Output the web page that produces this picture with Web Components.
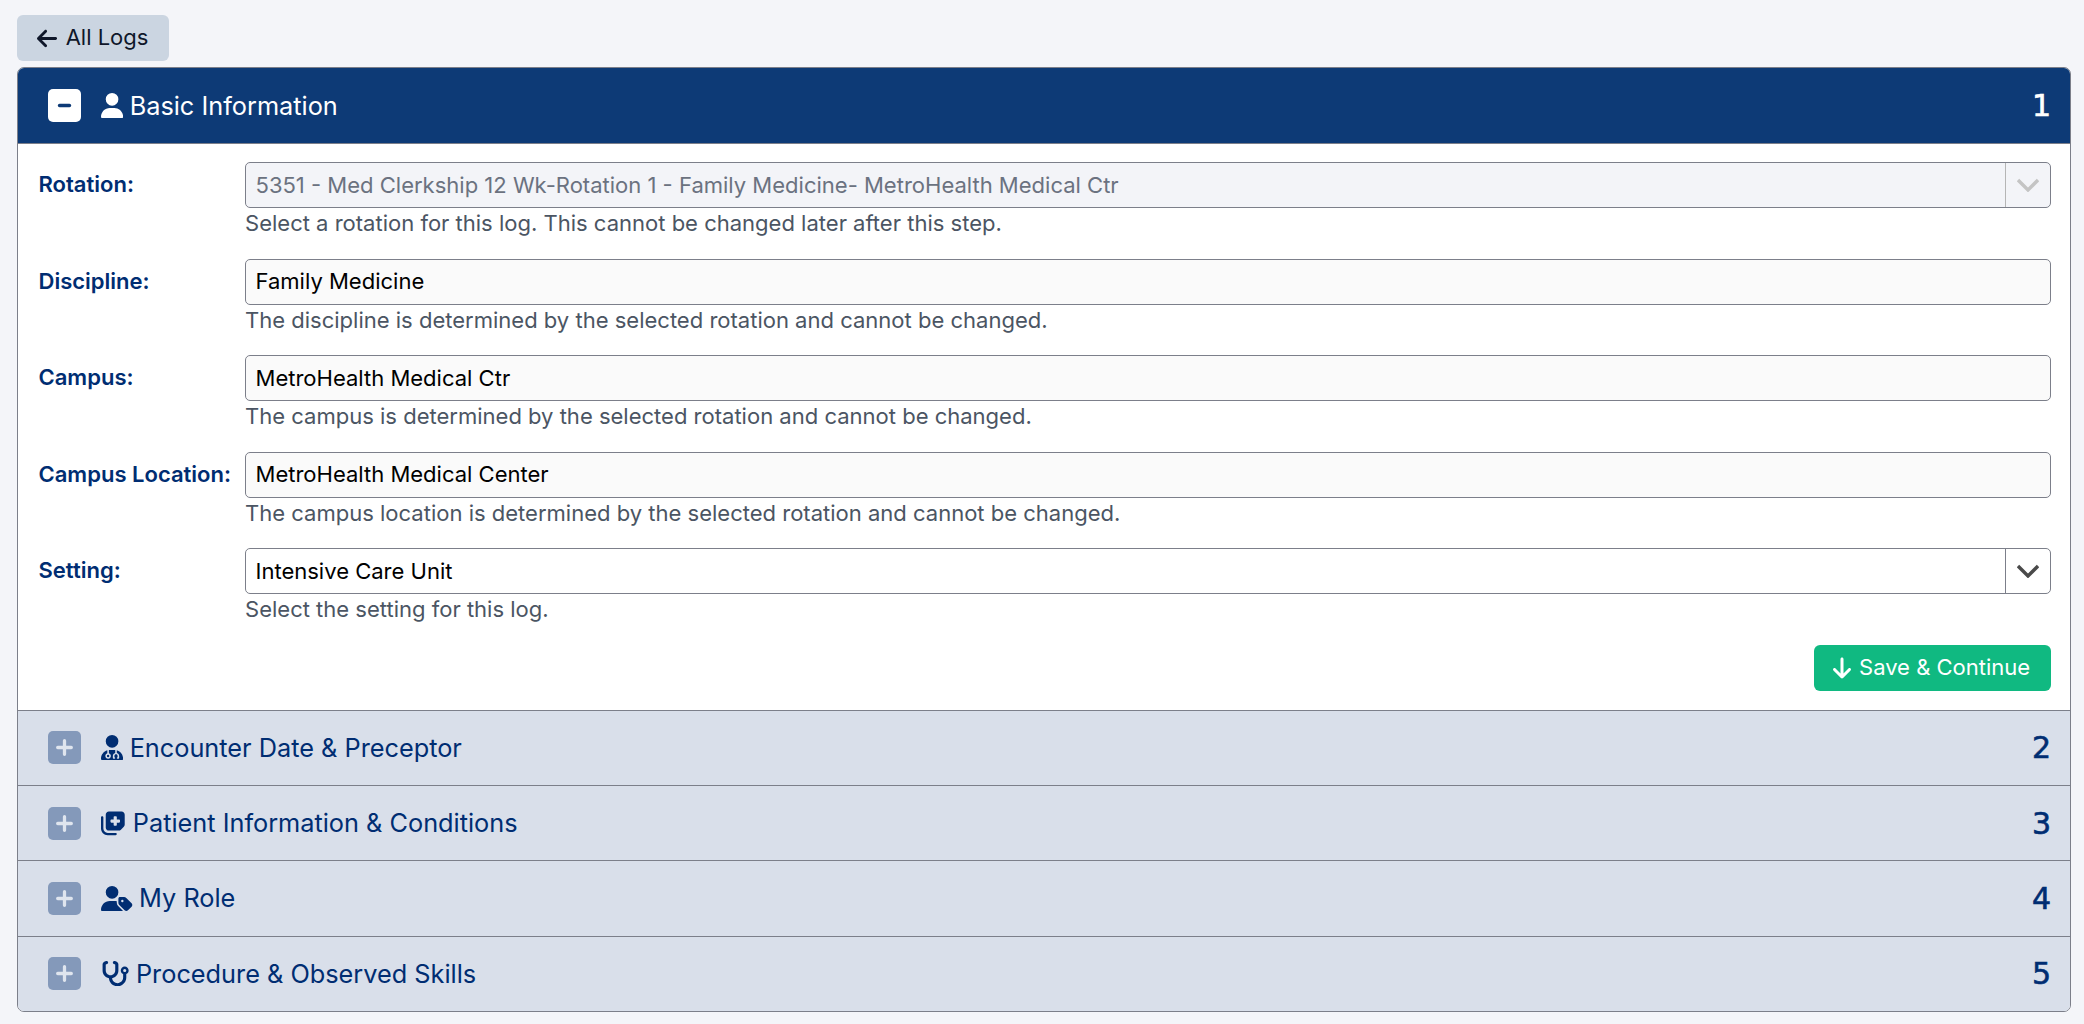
<!DOCTYPE html>
<html>
<head>
<meta charset="utf-8">
<title>Log</title>
<style>
  html, body { margin: 0; padding: 0; }
  body {
    background: #f4f5f9;
    font-family: Inter, "Liberation Sans", sans-serif;
    font-size: 22px;
    padding: 15px 13px 12px 17px;
  }
</style>
</head>
<body>
  <back-button label="All Logs"></back-button>
  <log-accordion>
    <log-section number="1" heading="Basic Information" icon="user" open>
      <log-field label="Rotation:" value="5351 - Med Clerkship 12 Wk-Rotation 1 - Family Medicine- MetroHealth Medical Ctr" help="Select a rotation for this log. This cannot be changed later after this step." kind="select" disabled></log-field>
      <log-field label="Discipline:" value="Family Medicine" help="The discipline is determined by the selected rotation and cannot be changed."></log-field>
      <log-field label="Campus:" value="MetroHealth Medical Ctr" help="The campus is determined by the selected rotation and cannot be changed."></log-field>
      <log-field label="Campus Location:" value="MetroHealth Medical Center" help="The campus location is determined by the selected rotation and cannot be changed."></log-field>
      <log-field label="Setting:" value="Intensive Care Unit" help="Select the setting for this log." kind="select"></log-field>
      <save-button label="Save &amp; Continue"></save-button>
    </log-section>
    <log-section number="2" heading="Encounter Date &amp; Preceptor" icon="doctor"></log-section>
    <log-section number="3" heading="Patient Information &amp; Conditions" icon="patient"></log-section>
    <log-section number="4" heading="My Role" icon="role"></log-section>
    <log-section number="5" heading="Procedure &amp; Observed Skills" icon="stethoscope"></log-section>
  </log-accordion>

<script>
const ICONS = {
  user: `<svg height="25.300" viewBox="0 0 448 512" fill="currentColor"><path d="M224 256A128 128 0 1 0 224 0a128 128 0 1 0 0 256zm-45.7 48C79.8 304 0 383.8 0 482.3C0 498.7 13.3 512 29.7 512H418.3c16.4 0 29.7-13.3 29.7-29.7C448 383.8 368.2 304 269.7 304H178.3z"/></svg>`,
  doctor: `<svg height="25.300" viewBox="0 0 448 512" fill="currentColor"><path d="M224 256A128 128 0 1 0 224 0a128 128 0 1 0 0 256zm-96 55.200C54 332.900 0 401.300 0 482.300C0 498.700 13.300 512 29.700 512H418.300c16.400 0 29.700-13.300 29.700-29.700c0-81-54-149.400-128-171.100V362c27.600 7.100 48 32.200 48 62v40c0 8.800-7.200 16-16 16H336c-8.800 0-16-7.200-16-16s7.200-16 16-16V424c0-17.700-14.300-32-32-32s-32 14.300-32 32v24c8.800 0 16 7.200 16 16s-7.200 16-16 16H256c-8.800 0-16-7.200-16-16V424c0-29.800 20.400-54.900 48-62V304.900c-6-.6-12.100-.9-18.300-.9H178.300c-6.200 0-12.300 .3-18.300 .9v65.400c23.100 6.900 40 28.300 40 53.700c0 30.900-25.100 56-56 56s-56-25.100-56-56c0-25.400 16.900-46.800 40-53.700V311.200zM144 448a24 24 0 1 0 0-48 24 24 0 1 0 0 48z"/></svg>`,
  patient: `<svg height="25.300" viewBox="0 0 512 512" fill="currentColor"><path d="M96 352V96c0-35.300 28.700-64 64-64H416c35.300 0 64 28.700 64 64V293.500c0 17-6.700 33.300-18.700 45.300l-58.500 58.500c-12 12-28.300 18.700-45.300 18.700H160c-35.300 0-64-28.700-64-64zM272 128c-8.800 0-16 7.200-16 16v48H208c-8.800 0-16 7.200-16 16v32c0 8.800 7.200 16 16 16h48v48c0 8.800 7.200 16 16 16h32c8.800 0 16-7.200 16-16V256h48c8.800 0 16-7.200 16-16V208c0-8.800-7.200-16-16-16H320V144c0-8.800-7.200-16-16-16H272zm24 336c13.300 0 24 10.700 24 24s-10.700 24-24 24H136C60.900 512 0 451.100 0 376V152c0-13.300 10.700-24 24-24s24 10.700 24 24l0 224c0 48.600 39.400 88 88 88H296z"/></svg>`,
  role: `<svg height="25.300" viewBox="0 0 640 512" fill="currentColor"><path d="M224 256A128 128 0 1 0 224 0a128 128 0 1 0 0 256zm-45.700 48C79.800 304 0 383.800 0 482.300C0 498.700 13.300 512 29.700 512H418.300c10 0 18.800-4.900 24.200-12.500l-99.200-99.200c-14.900-14.900-23.300-35.100-23.300-56.100v-33c-15.900-4.700-32.800-7.200-50.300-7.200H178.300zM384 224c-17.700 0-32 14.300-32 32v82.700c0 17 6.700 33.300 18.700 45.300L478.100 491.300c18.700 18.700 49.100 18.700 67.900 0l73.400-73.400c18.700-18.700 18.700-49.100 0-67.900L512 242.700c-12-12-28.300-18.700-45.300-18.700H384zm24 80a24 24 0 1 1 48 0 24 24 0 1 1 -48 0z"/></svg>`,
  stethoscope: `<svg height="25.300" viewBox="0 0 576 512" fill="currentColor"><path d="M142.400 21.900c5.600 16.800-3.500 34.900-20.200 40.500L96 71.100V192c0 53 43 96 96 96s96-43 96-96V71.100l-26.100-8.700c-16.800-5.600-25.800-23.700-20.200-40.500s23.700-25.800 40.500-20.200l26.100 8.700C334.500 19.100 352 43.300 352 70.700V192c0 77.200-54.600 141.600-127.300 156.700C231 404.600 278.400 448 336 448c61.900 0 112-50.100 112-112V265.300c-28.300-12.300-48-40.500-48-73.300c0-44.200 35.800-80 80-80s80 35.800 80 80c0 32.800-19.700 61-48 73.300V336c0 97.200-78.800 176-176 176c-92.900 0-168.900-71.900-175.500-163.100C87.200 334.200 32 269.600 32 192V70.700c0-27.500 17.600-51.800 43.700-60.500l26.100-8.800c16.800-5.600 34.900 3.500 40.500 20.200zM480 224a32 32 0 1 0 0-64 32 32 0 1 0 0 64z"/></svg>`
};

class BackButton extends HTMLElement {
  constructor() {
    super();
    this.shadow = this.attachShadow({ mode: 'open' });
  }
  connectedCallback() {
    this.shadow.innerHTML = /*html*/`
      <style>
        :host { display: flex; }
        button {
          display: flex; align-items: center; gap: 8.500px;
          height: 46px; width: 152px; padding: 0 0 0 20px;
          background: #cbd5e1; color: #0f172a;
          border: 0; border-radius: 6px;
          font: 400 22px Inter, sans-serif;
        }
        span { padding-bottom: 2px; }
      </style>
      <button>
        <svg height="23" viewBox="0 0 448 512" fill="currentColor"><path d="M9.400 233.400c-12.500 12.500-12.500 32.800 0 45.300l160 160c12.500 12.500 32.800 12.500 45.300 0s12.500-32.800 0-45.300L109.300 288 416 288c17.700 0 32-14.300 32-32s-14.300-32-32-32l-306.700 0L214.600 118.600c12.500-12.500 12.500-32.800 0-45.300s-32.800-12.500-45.300 0l-160 160z"/></svg>
        <span>${this.getAttribute('label')}</span>
      </button>`;
  }
}

class LogAccordion extends HTMLElement {
  constructor() {
    super();
    this.shadow = this.attachShadow({ mode: 'open' });
  }
  connectedCallback() {
    this.shadow.innerHTML = /*html*/`
      <style>
        :host {
          display: block; margin-top: 6px;
          border: 1px solid #7c7f8a; border-radius: 7px;
          overflow: hidden; background: #fff;
        }
      </style>
      <slot></slot>`;
  }
}

class LogSection extends HTMLElement {
  constructor() {
    super();
    this.shadow = this.attachShadow({ mode: 'open' });
  }
  connectedCallback() {
    const open = this.hasAttribute('open');
    const number = this.getAttribute('number');
    this.shadow.innerHTML = /*html*/`
      <style>
        :host { display: block; }
        :host(:not(:first-child)) { border-top: 1px solid #7c7f8a; }
        .head {
          display: flex; align-items: center;
          height: 74.350px; padding: 0 19px 0 29.500px;
          background: #d9dfea; color: #002d72;
          font-size: 25.300px; line-height: 1;
        }
        :host([open]) .head { background: #0d3a76; color: #fff; height: 76px; border-bottom: 1px solid #7c7f8a; box-sizing: border-box; }
        .toggle {
          flex: none; width: 33px; height: 33px; margin-right: 20.500px;
          border-radius: 5px; background: #8499ba;
          display: flex; align-items: center; justify-content: center;
        }
        :host([open]) .toggle { background: #fff; }
        .icon { display: flex; flex: none; margin-right: 6.500px; }
        .title { flex: 1; padding-bottom: .6px; }
        .num { font: 400 30px "DejaVu Sans", sans-serif; -webkit-text-stroke: .6px currentColor; }
        .body { padding: 18px 19px 19px 20.500px; }
      </style>
      <div class="head">
        <span class="toggle">
          <svg width="17" height="17" viewBox="0 0 17 17" fill="none" stroke="${open ? '#0d3a76' : '#dfe5ee'}" stroke-width="3.300" stroke-linecap="round">
            ${open ? '<path d="M3.500 8.500h10"/>' : '<path d="M1.700 8.500h13.600M8.500 1.700v13.600"/>'}
          </svg>
        </span>
        <span class="icon">${ICONS[this.getAttribute('icon')]}</span>
        <span class="title">${this.getAttribute('heading').replace('&', '&amp;')}</span>
        <span class="num">${number}</span>
      </div>
      ${open ? '<div class="body"><slot></slot></div>' : ''}`;
  }
}

class LogField extends HTMLElement {
  constructor() {
    super();
    this.shadow = this.attachShadow({ mode: 'open' });
  }
  connectedCallback() {
    const isSelect = this.getAttribute('kind') === 'select';
    this.shadow.innerHTML = /*html*/`
      <style>
        :host {
          display: grid; grid-template-columns: 206.500px 1fr;
          margin-bottom: 19.500px;
          font-size: 22.030px;
        }
        label {
          height: 46px; line-height: 45.500px;
          font-weight: 600; color: #002d72; white-space: nowrap;
        }
        .box {
          display: flex; align-items: center; box-sizing: border-box;
          height: 46px; border: 1px solid #7c7f8a; border-radius: 5px;
          background: ${isSelect ? '#fff' : '#fafafa'};
          color: #000;
        }
        .value { flex: 1; padding: 0 0 1px 9.500px; }
        .arrow {
          width: 44px; height: 100%; border-left: 1px solid #7c7f8a;
          display: flex; align-items: center; justify-content: center;
          color: #4a4a4a;
        }
        :host([disabled]) .box { background: #f3f4f8; color: #6b7280; }
        :host([disabled]) .arrow { color: #c4c4c4; border-left-color: #b5b5b5; }
        .help { color: #4b5563; line-height: 31px; height: 31px; }
      </style>
      <label>${this.getAttribute('label')}</label>
      <div>
        <div class="box">
          <span class="value">${this.getAttribute('value')}</span>
          ${isSelect ? `<span class="arrow"><svg width="22" height="14" viewBox="0 0 22 14" fill="none" stroke="currentColor" stroke-width="3.400"><path d="M1 2l10 10L21 2"/></svg></span>` : ''}
        </div>
        <div class="help">${this.getAttribute('help')}</div>
      </div>`;
  }
}

class SaveButton extends HTMLElement {
  constructor() {
    super();
    this.shadow = this.attachShadow({ mode: 'open' });
  }
  connectedCallback() {
    this.shadow.innerHTML = /*html*/`
      <style>
        :host { display: flex; justify-content: flex-end; }
        button {
          display: flex; align-items: center; gap: 8px;
          height: 46px; width: 237px; padding: 0 0 0 19px;
          background: #10b981; color: #fff;
          border: 0; border-radius: 6px;
          font: 400 22.030px Inter, sans-serif;
        }
        span { padding-bottom: 1px; }
      </style>
      <button>
        <svg height="24" viewBox="0 0 384 512" fill="currentColor"><path d="M169.400 470.600c12.500 12.500 32.800 12.500 45.300 0l160-160c12.500-12.500 12.500-32.800 0-45.300s-32.800-12.500-45.300 0L224 370.800 224 64c0-17.700-14.300-32-32-32s-32 14.300-32 32l0 306.700L54.600 265.400c-12.500-12.500-32.800-12.500-45.300 0s-12.500 32.800 0 45.300l160 160z"/></svg>
        <span>${this.getAttribute('label').replace('&', '&amp;')}</span>
      </button>`;
  }
}

customElements.define('back-button', BackButton);
customElements.define('log-accordion', LogAccordion);
customElements.define('log-section', LogSection);
customElements.define('log-field', LogField);
customElements.define('save-button', SaveButton);
</script>
</body>
</html>
